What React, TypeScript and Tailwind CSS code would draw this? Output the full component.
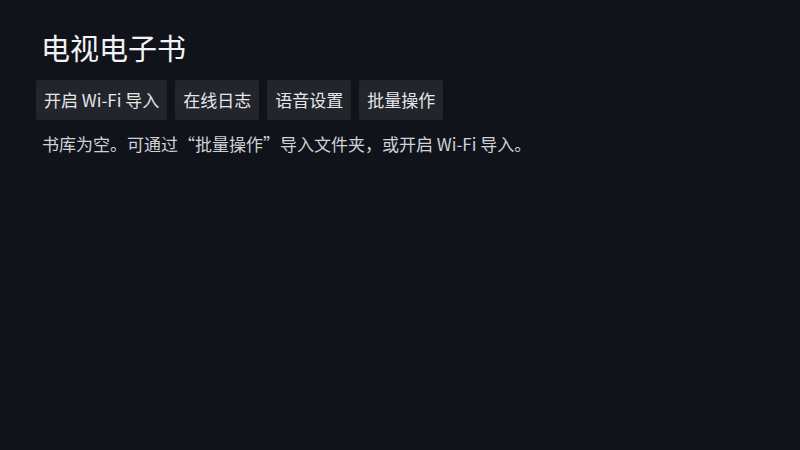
import React from 'react';

const actions = ['开启 Wi-Fi 导入', '在线日志', '语音设置', '批量操作'];

const App: React.FC = () => {
  return (
    <div
      className="w-[800px] h-[450px] bg-[#11131a] text-white px-[36px] pt-[27px]"
      style={{ fontFamily: '"Noto Sans CJK SC", "Noto Sans", sans-serif' }}
    >
      <h1 className="text-[29px] leading-[41px] font-normal text-[#f2f3f5] pl-[5px]">电视电子书</h1>

      <div className="flex gap-[8px] mt-[12px]">
        {actions.map((label) => (
          <button
            key={label}
            className="h-[40px] px-[8px] rounded-[2px] bg-[#22252c] text-[17px] text-[#e6e7ea]"
          >
            {label}
          </button>
        ))}
      </div>

      <p className="mt-[11px] pl-[6px] text-[17px] leading-[26px] text-[#cfd2d7]">
        书库为空。可通过“批量操作”导入文件夹，或开启 Wi-Fi 导入。
      </p>
    </div>
  );
};

export default App;
